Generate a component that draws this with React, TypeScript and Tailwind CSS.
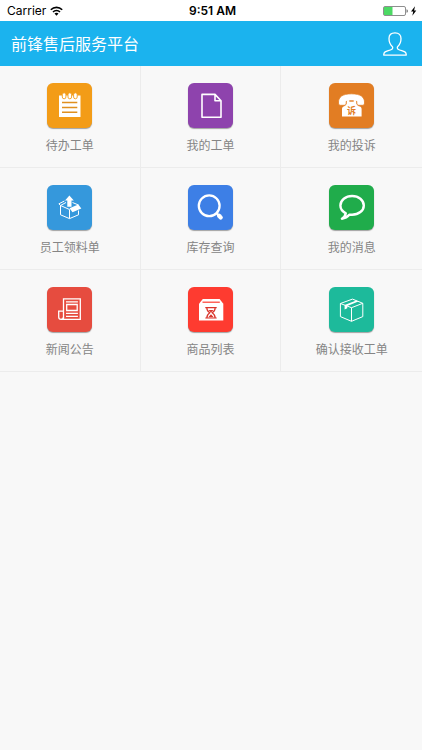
import type { ReactNode } from "react";

type Item = { label: string; tile: string; icon: ReactNode };

const items: Item[] = [
  {
    label: "待办工单",
    tile: "bg-[#f39c17]",
    icon: (
      <>
        <path d="M12 12.5h21.5V34H12z" fill="#fff" />
        <g fill="#fff" stroke="#f39c17" strokeWidth="0.9">
          <rect x="15.3" y="9.8" width="3.6" height="6" rx="1.8" />
          <rect x="21" y="9.8" width="3.6" height="6" rx="1.8" />
          <rect x="26.6" y="9.8" width="3.6" height="6" rx="1.8" />
        </g>
        <path d="M15 19.5h15.3M15 24.4h15.3M15 29.2h15.3" stroke="#e0901f" strokeWidth="1.5" />
      </>
    ),
  },
  {
    label: "我的工单",
    tile: "bg-[#8e43ad]",
    icon: (
      <path
        d="M14 11.4h13l6 6.3v16.6H14zM27 11.4v6.3h6"
        fill="none"
        stroke="#fff"
        strokeWidth="1.6"
        strokeLinejoin="round"
      />
    ),
  },
  {
    label: "我的投诉",
    tile: "bg-[#e27d23]",
    icon: (
      <>
        <path
          d="M17.6 17h2.4v2h5v-2h2.400v3.200c.6 1.900 1.900 2.900 3.600 3.300 1.100.5 1.600 1.300 1.600 2.500v7.400H13V26c0-1.200.5-2 1.600-2.500 1.600-.6 2.600-1.600 3-3.300z"
          fill="#fff"
        />
        <path
          d="M9.500 20c-.4-6 4-9.200 13-9.200s13.400 3.200 13 9.200c0 1.600-.8 2.300-2.100 2.300h-3.500c-1.400 0-2.100-.8-2.100-2.300v-1.600H17.200V20c0 1.500-.7 2.300-2.100 2.300h-3.500c-1.300 0-2.100-.7-2.100-2.300z"
          fill="#fff"
          stroke="#e27d23"
          strokeWidth="0.8"
        />
        <path d="M18 17.500h9v4.500h-9z" fill="#fff" />
        <path d="M20.300 17.300h4.400v1.400h-4.400z" fill="#e27d23" />
        <text
          x="22.5"
          y="31"
          textAnchor="middle"
          fill="#e27d23"
          className="font-['Noto_Sans_CJK_SC',sans-serif] text-[9px] font-bold"
        >
          诉
        </text>
      </>
    ),
  },
  {
    label: "员工领料单",
    tile: "bg-[#3598dc]",
    icon: (
      <>
        <path
          d="M13.500 20.500v9.300l9 3.800 9-3.800v-4.300M22.500 24.500v9M13.500 20.500l9 4M13.500 20.500l5.500-3M25.500 17.500l6 2.500M13.500 20.500l-1.600-1.700 5.500-2.800"
          fill="none"
          stroke="#fff"
          strokeWidth="1"
          strokeLinejoin="round"
        />
        <path d="M22.500 23.200l8.800-3.600 3 4-8.800 3.600z" fill="#fff" />
        <path d="M22.400 10.500l4.400 4.900h-2.300v6.300h-4.200v-6.300H18z" fill="#fff" />
      </>
    ),
  },
  {
    label: "库存查询",
    tile: "bg-[#3d7fe6]",
    icon: (
      <g fill="none" stroke="#fff" strokeLinecap="round">
        <circle cx="21.200" cy="20.800" r="10.400" strokeWidth="2.300" />
        <path d="M28.600 28.200l2 2" strokeWidth="2" />
        <path d="M31 30.800l1.700 1.700" strokeWidth="4.200" />
      </g>
    ),
  },
  {
    label: "我的消息",
    tile: "bg-[#20ac4b]",
    icon: (
      <path
        d="M16.800 28.200c-3.200-1.700-5.400-4.500-5.400-7.800 0-5.200 5.200-9.400 11.700-9.400s11.700 4.200 11.700 9.400-5.200 9.400-11.700 9.400c-.9 0-1.700-.1-2.500-.2-1.900 2.300-4.400 3.800-7.700 4.100 2.200-1.400 3.500-3.200 3.900-5.500z"
        fill="none"
        stroke="#fff"
        strokeWidth="2.400"
        strokeLinejoin="round"
      />
    ),
  },
  {
    label: "新闻公告",
    tile: "bg-[#e64c3f]",
    icon: (
      <g fill="none" stroke="#fff" strokeWidth="1.300">
        <path d="M16.500 32V11.800h16.800v20.600H14c-1.500 0-2.300-.9-2.300-2.300v-6h4.800" />
        <path d="M16.500 30c0 1.600-.8 2.400-2.300 2.400" />
        <path d="M19.700 17.500h10.500v6H19.700z" />
        <path d="M19 14.800h11.900M19 26.400h11.900M19 29.300h11.900" />
      </g>
    ),
  },
  {
    label: "商品列表",
    tile: "bg-[#fe3b30]",
    icon: (
      <>
        <path d="M14.800 12h16.800l3.700 4.800v16.700H11V16.800z" fill="#fff" />
        <path d="M14.500 15.200h17.300" stroke="#fe3b30" strokeWidth="1.200" />
        <path
          d="M17.300 20.700h11.400M17.300 31h11.400M18.800 20.700c0 3 1.300 4.100 3 5.100-1.700 1.100-3 2.200-3 5.200M27.200 20.700c0 3-1.300 4.100-3 5.100 1.700 1.100 3 2.200 3 5.200"
          fill="none"
          stroke="#d9342b"
          strokeWidth="1.200"
        />
        <path d="M20.500 23h5L23 25.500zM20.300 30.300l2.700-3 2.700 3z" fill="#d9342b" />
      </>
    ),
  },
  {
    label: "确认接收工单",
    tile: "bg-[#1dba9b]",
    icon: (
      <>
        <path
          d="M11.400 16.500l12.100-4.400 10.300 4.200v13.300l-11.300 4.700-11.100-4.700zM11.400 16.500l11.100 4.200 11.300-4.400M22.500 20.700v13.600"
          fill="none"
          stroke="#fff"
          strokeWidth="1"
          strokeLinejoin="round"
        />
        <path d="M15.600 18l11.700-4.500 2 .9-11 4.500v2.300l-2.700 1.400z" fill="#fff" />
      </>
    ),
  },
];

function StatusBar() {
  return (
    <div className="grid h-[21px] grid-cols-3 items-center bg-white pr-1 pl-[7px] font-['Inter','Liberation_Sans',sans-serif] text-xs text-black">
      <div className="flex items-center gap-1">
        <span>Carrier</span>
        <svg width="13" height="10" viewBox="0 0 13 10" aria-hidden="true">
          <g fill="none" stroke="#000" strokeWidth="1.600">
            <path d="M.8 3.800c3.200-3.300 8.200-3.300 11.400 0" />
            <path d="M3 6c2-2 5-2 7 0" />
          </g>
          <path d="M4.500 7.600c1.200-1.100 2.800-1.100 4 0l-2 2.100z" />
        </svg>
      </div>
      <span className="text-center font-semibold">9:51 AM</span>
      <svg className="justify-self-end" width="35" height="12" viewBox="0 0 35 12" aria-hidden="true">
        <rect x=".5" y="1.500" width="22" height="9" rx="1.500" fill="#fff" stroke="#8e8e8e" />
        <path d="M1 2h8.500v8H1z" fill="#4cd964" />
        <path d="M23.500 4.200c1 .2 1.400.9 1.400 1.800s-.4 1.600-1.400 1.800z" fill="#777" />
        <path d="M32 1.300l-4 5.200h2.300l-1 4.300 4-5.400h-2.200z" fill="#000" />
      </svg>
    </div>
  );
}

export default function App() {
  return (
    <div className="min-h-screen bg-[#f8f8f8] font-['Noto_Sans_CJK_SC',sans-serif]">
      <StatusBar />
      <header className="flex h-[45px] items-center justify-between bg-[#1bb3ee] pr-3.5 pl-[11px] text-white">
        <h1 className="pb-0.5 text-base leading-6">前锋售后服务平台</h1>
        <button type="button" aria-label="个人中心">
          <svg className="block" width="26" height="26" viewBox="0 0 26 26">
            <path
              d="M13 1.800c-4 0-6 2.300-6 5.700 0 3.500 1.200 6.200 3.200 7.900.7.600.7 2.200-.3 2.800-2.200 1.300-5 1.600-6.800 2.700-1 .7-1.400 1.800-1.400 3.200h22.600c0-1.400-.4-2.500-1.400-3.200-1.800-1.100-4.600-1.400-6.800-2.700-1-.6-1-2.200-.3-2.800 2-1.700 3.200-4.400 3.200-7.900 0-3.400-2-5.700-6-5.700z"
              fill="none"
              stroke="#fff"
              strokeWidth="1.300"
              strokeLinejoin="round"
            />
          </svg>
        </button>
      </header>
      <main className="grid grid-cols-3">
        {items.map((item) => (
          <button
            key={item.label}
            type="button"
            className="flex h-[102px] flex-col items-center gap-[7px] border-r border-b border-[#ececec] pt-[17px] nth-[3n]:border-r-0"
          >
            <span className={`rounded-md shadow-[0_1px_1px_rgba(0,0,0,0.35)] ${item.tile}`}>
              <svg className="block" width="45" height="45" viewBox="0 0 45 45" aria-hidden="true">
                {item.icon}
              </svg>
            </span>
            <span className="text-xs leading-5 text-[#858585]">{item.label}</span>
          </button>
        ))}
      </main>
    </div>
  );
}
